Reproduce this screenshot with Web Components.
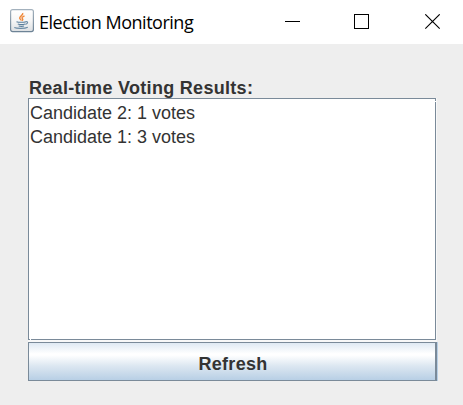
<!DOCTYPE html>
<html lang="en">
<head>
<meta charset="utf-8">
<title>Election Monitoring</title>
<style>
body { margin: 0; background: #eee; overflow: hidden; font-family: "Liberation Sans", Arial, sans-serif; font-size: 18px; color: #333; }
</style>
</head>
<body>
<app-window>
  <title-bar slot="title">Election Monitoring</title-bar>
  <result-label>Real-time Voting Results:</result-label>
  <result-list>
    <result-row>Candidate 2: 1 votes</result-row>
    <result-row>Candidate 1: 3 votes</result-row>
  </result-list>
  <metal-button>Refresh</metal-button>
</app-window>
<script>
const define = (name, markup) => customElements.define(name, class extends HTMLElement {
  constructor() {
    super();
    this.attachShadow({ mode: 'open' }).innerHTML = markup;
  }
});

define('app-window', `
<style>
:host { display: flex; flex-direction: column; width: 463px; height: 405px; background: #eee; }
main { flex: 1; display: flex; flex-direction: column; padding: 33px 25px 24px 28px; }
</style>
<slot name="title"></slot>
<main><slot></slot></main>`);

define('java-icon', `
<style>:host { display: block; width: 24px; height: 24px; } svg { display: block; }</style>
<svg width="24" height="24" viewBox="0 0 24 24" fill="none">
  <defs><linearGradient id="g" x1="0" y1="0" x2="0" y2="1"><stop offset="0" stop-color="#fff"/><stop offset=".5" stop-color="#f6f6f6"/><stop offset="1" stop-color="#dcdfe2"/></linearGradient>
  <linearGradient id="s" x1="0" y1="0" x2="0" y2="1"><stop offset="0" stop-color="#a3b1bd"/><stop offset="1" stop-color="#6d8396"/></linearGradient></defs>
  <rect x=".6" y=".6" width="22.800" height="22" rx="2" fill="url(#g)" stroke="url(#s)" stroke-width="1.200"/>
  <path d="M12.700 4c1 2.200-3.600 3.300-3 5.200.3.900 1.200 1.400 1.600 2.300M14.500 6.800c-2.600 1.100-3 1.900-2 3 .6.7.3 1.300-.4 1.900" stroke="#ef8738" stroke-width="1.400"/>
  <path d="M6.500 12.700c2 .8 7.500.8 9.300 0M7.800 15c2 .6 5.500.6 7.200 0M8.700 17c1.600.5 3.900.5 5.300 0" stroke="#587d9b" stroke-width="1.100"/>
  <path d="M15.500 12.700c2.900-.7 2.800 2-.2 2.700M4.300 18.500c2.500 1.200 10.500 1.200 13.500-.3" stroke="#6c8ca6" stroke-width="1.100"/>
</svg>`);

define('window-controls', `
<style>:host { display: block; } svg { display: block; }</style>
<svg width="156" height="16" viewBox="0 0 156 16" fill="none" stroke="#000">
  <path d="M0 7.500h15" shape-rendering="crispEdges"/>
  <rect x="69.500" y=".5" width="14" height="14" shape-rendering="crispEdges"/>
  <path d="M140.300 .3l14.400 14.400M154.700 .3l-14.400 14.400" stroke-width="1.100"/>
</svg>`);

define('title-bar', `
<style>
:host { display: flex; align-items: flex-start; box-sizing: border-box; height: 44px; padding: 9px 22px 0 10px; background: #fff; color: #000; }
.name { margin: 1px 0 0 5px; font: 18px/24px "Open Sans", "Noto Sans", sans-serif; letter-spacing: -.48px; white-space: nowrap; flex: 1; }
window-controls { margin-top: 5px; width: 156px; }
</style>
<java-icon></java-icon><span class="name"><slot></slot></span><window-controls></window-controls>`);

define('result-label', `
<style>:host { display: block; box-sizing: border-box; height: 21px; line-height: 21px; padding: 1px 0 0 1px; font-weight: bold; white-space: nowrap; letter-spacing: .3px; }</style>
<slot></slot>`);

define('result-list', `
<style>
:host { display: block; position: relative; box-sizing: border-box; width: 409px; height: 244px; border-right: 1px solid #f8f8f8; border-bottom: 2px solid #f8f8f8; }
.pane { box-sizing: border-box; height: 242px; background: #fff; border: 1px solid #7a8a99; padding: 3px 1px; }
i { position: absolute; background: #fff; }
.a { right: 0; top: 3px; width: 1px; height: 1px; }
.b { left: 2px; bottom: 0; width: 1px; height: 1px; }
</style>
<div class="pane"><slot></slot></div><i class="a"></i><i class="b"></i>`);

define('result-row', `
<style>:host { display: block; height: 24px; line-height: 23px; white-space: nowrap; }</style>
<slot></slot>`);

define('metal-button', `
<style>
:host { display: block; width: 410px; height: 39px; background: #b8cfe5; }
button { display: block; box-sizing: border-box; width: 409px; height: 39px; margin: 0; padding: 5px 0 0 2px; border: 1px solid #7a8a99; border-right-width: 2px; border-radius: 0; background: linear-gradient(#dfe9f3 0, #fff 29%, #fff 33%, #dce7f1 62%, #b8cfe5 100%); font: bold 18px "Liberation Sans", Arial, sans-serif; letter-spacing: .3px; color: #333; }
</style>
<button><slot></slot></button>`);
</script>
</body>
</html>
